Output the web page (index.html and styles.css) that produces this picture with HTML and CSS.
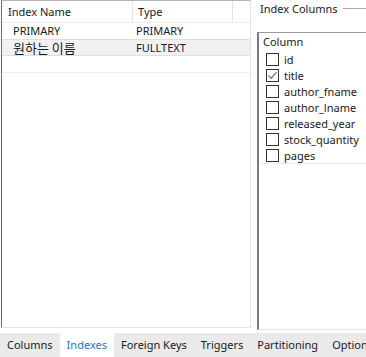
FILE: index.html
```html
<!DOCTYPE html>
<html>
<head>
<meta charset="utf-8">
<link rel="stylesheet" href="styles.css">
</head>
<body>
<div class="main">
  <div class="left">
    <div class="grid">
      <div class="hrow">
        <div class="hc c1">Index Name</div>
        <div class="hc c2">Type</div>
        <div class="hc c3"></div>
      </div>
      <div class="row">
        <div class="cell c1 v">PRIMARY</div>
        <div class="cell c2 v">PRIMARY</div>
      </div>
      <div class="row sel">
        <div class="cell c1 v ko">원하는 이름</div>
        <div class="cell c2 v">FULLTEXT</div>
      </div>
      <div class="row empty"></div>
    </div>
  </div>
  <div class="right">
    <div class="legend"><span class="ltext">Index Columns</span><span class="lline"></span></div>
    <div class="listbox">
      <div class="lhead">Column</div>
      <div class="item"><span class="cb"></span>id</div>
      <div class="item"><span class="cb on"><svg width="11" height="11" viewBox="0 0 11 11"><path d="M1.5 5.5 L4.2 8.3 L9.5 2.2" fill="none" stroke="#6a6a6a" stroke-width="1.2"/></svg></span>title</div>
      <div class="item"><span class="cb"></span>author_fname</div>
      <div class="item"><span class="cb"></span>author_lname</div>
      <div class="item"><span class="cb"></span>released_year</div>
      <div class="item"><span class="cb"></span>stock_quantity</div>
      <div class="item last"><span class="cb"></span>pages</div>
    </div>
  </div>
</div>
<div class="tabs">
  <div class="tab">Columns</div>
  <div class="tab active">Indexes</div>
  <div class="tab">Foreign Keys</div>
  <div class="tab">Triggers</div>
  <div class="tab">Partitioning</div>
  <div class="tab">Options</div>
</div>
</body>
</html>
```
FILE: styles.css
```css
html, body {
  margin: 0;
  padding: 0;
}
body {
  width: 366px;
  height: 357px;
  overflow: hidden;
  background: #ffffff;
  font-family: "Noto Sans", "Noto Sans CJK KR", sans-serif;
  font-size: 11px;
  color: #1a1a1a;
  display: flex;
  flex-direction: column;
}
.main {
  height: 333px;
  display: flex;
  flex-direction: row;
}
.left {
  width: 250px;
  margin-left: 1px;
  height: 328px;
  border-left: 1px solid #6a6a6a;
  border-top: 1px solid #b4b4b4;
  border-right: 1px solid #e3e3e3;
  border-bottom: 1px solid #e3e3e3;
  box-sizing: border-box;
}
.hrow {
  display: flex;
  height: 22px;
  border-bottom: 1px solid #ececec;
  box-sizing: border-box;
}
.hc {
  line-height: 21px;
  padding-left: 6px;
  box-sizing: border-box;
}
.hc.c1 { width: 131px; border-right: 1px solid #e3e3e3; }
.hc.c2 { width: 100px; border-right: 1px solid #e3e3e3; padding-left: 5px; }
.hc.c3 { flex: 1; }
.row {
  display: flex;
  height: 16px;
  box-sizing: border-box;
}
.row.sel {
  background: #f1f1f1;
  border-top: 1px solid #dedede;
  border-bottom: 1px solid #dedede;
  height: 17px;
}
.row.empty {
  height: 17px;
  border-bottom: 1px solid #ececec;
}
.cell {
  line-height: 15px;
  box-sizing: border-box;
}
.cell.c1 { width: 133px; padding-left: 11px; }
.cell.c2 { padding-left: 1px; }
.ko {
  font-family: "Noto Sans CJK KR", sans-serif;
  font-size: 13px;
}
.right {
  flex: 1;
  display: flex;
  flex-direction: column;
  padding-left: 6px;
  min-width: 0;
}
.legend {
  display: flex;
  align-items: center;
  height: 17px;
  margin-left: 3px;
}
.ltext {
  padding-right: 5px;
  white-space: nowrap;
}
.lline {
  flex: 1;
  height: 1px;
  background: #a8a8a8;
}
.listbox {
  margin-top: 15px;
  height: 298px;
  border-left: 2px solid #7a7a7a;
  border-top: 1px solid #9a9a9a;
  border-bottom: 1px solid #e3e3e3;
  box-sizing: border-box;
}
.lhead {
  height: 18px;
  line-height: 18px;
  padding-left: 4px;
}
.item {
  display: flex;
  align-items: center;
  height: 16px;
  padding-left: 7px;
  white-space: nowrap;
}
.item.last {
  border-bottom: 1px solid #ececec;
}
.cb {
  flex: none;
  width: 11px;
  height: 11px;
  border: 1px solid #333333;
  background: #fff;
  margin-right: 5px;
  display: flex;
  align-items: center;
  justify-content: center;
}
.tabs {
  height: 24px;
  background: #eaeaea;
  display: flex;
  flex-direction: row;
  overflow: hidden;
}
.tab {
  flex: none;
  line-height: 24px;
  padding: 0 7px;
  color: #1a1a1a;
  white-space: nowrap;
}
.tab.active {
  background: #ffffff;
  color: #1e73c8;
}
```
